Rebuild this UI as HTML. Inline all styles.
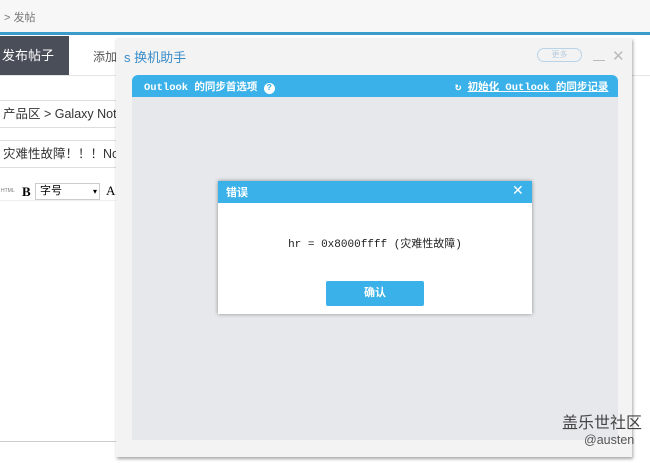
<!DOCTYPE html>
<html><head><meta charset="utf-8"><style>
*{margin:0;padding:0;box-sizing:border-box}
body{width:650px;height:463px;overflow:hidden;background:#fff;font-family:"Liberation Sans","Noto Sans CJK SC",sans-serif;position:relative}
.a{position:absolute}
</style></head><body>
<div class="a" style="left:0;top:0;width:650px;height:32px;background:#f7f7f7"></div>
<div class="a" style="left:4px;top:9px;font-size:11px;color:#777">&gt; 发帖</div>
<div class="a" style="left:0;top:32px;width:650px;height:3px;background:#3a9ccb"></div>
<div class="a" style="left:0;top:36px;width:69px;height:39px;background:#4a4e59;color:#fff;font-size:13px;line-height:39px;padding-left:2px">发布帖子</div>
<div class="a" style="left:93px;top:48px;font-size:12px;color:#555">添加</div>
<div class="a" style="left:0;top:75px;width:650px;height:1px;background:#e5e5e5"></div>
<div class="a" style="left:-2px;top:100px;width:300px;height:28px;border:1px solid #ddd;font-size:12.5px;line-height:26px;padding-left:4px;color:#333;white-space:nowrap;overflow:hidden">产品区 &gt; Galaxy Note系</div>
<div class="a" style="left:-2px;top:140px;width:300px;height:28px;border:1px solid #ddd;font-size:12.5px;line-height:26px;padding-left:4px;color:#333;white-space:nowrap;overflow:hidden">灾难性故障！！！Note</div>
<div class="a" style="left:0;top:181px;width:300px;height:20px;border-bottom:1px solid #eee"></div>
<div class="a" style="left:1px;top:188px;font-size:5px;color:#777">HTML</div>
<div class="a" style="left:22px;top:184px;font-size:13px;font-weight:bold;font-family:'Liberation Serif',serif">B</div>
<div class="a" style="left:35px;top:183px;width:65px;height:17px;border:1px solid #ccc;font-size:11px;line-height:15px;padding-left:4px">字号<span style="position:absolute;right:2px;font-size:8px">▾</span></div>
<div class="a" style="left:106px;top:183px;font-size:13px;font-family:'Liberation Serif',serif">A</div>
<div class="a" style="left:0;top:441px;width:120px;height:1px;background:#ccc"></div>
<div class="a" style="left:116px;top:38px;width:516px;height:419px;background:#f3f3f3;box-shadow:1px 2px 3px rgba(0,0,0,.35)"></div>
<div class="a" style="left:124px;top:47px;font-size:13px;color:#3a8cc8">s 换机助手</div>
<div class="a" style="left:537px;top:48px;width:45px;height:14px;border:1px solid #b8d4ea;border-radius:8px;font-size:8px;color:#b8cce0;text-align:center;line-height:12px">更多</div>
<div class="a" style="left:593px;top:60px;width:12px;height:1px;background:#bbb"></div>
<div class="a" style="left:612px;top:47px;font-size:15px;color:#bbb">✕</div>
<div class="a" style="left:132px;top:75px;width:486px;height:22px;background:#3ab1e8;border-radius:6px 6px 0 0"></div>
<div class="a" style="left:144px;top:79px;font-size:10.5px;color:#fff;font-weight:bold;font-family:'Liberation Mono','Noto Sans CJK SC',monospace">Outlook 的同步首选项 <span style="display:inline-block;width:11px;height:11px;border-radius:50%;background:#fff;color:#3ab1e8;text-align:center;line-height:11px;font-size:9px">?</span></div>
<div class="a" style="left:455px;top:79px;font-size:10.5px;color:#fff;font-weight:bold;font-family:'Liberation Mono','Noto Sans CJK SC',monospace">↻ <u>初始化 Outlook 的同步记录</u></div>
<div class="a" style="left:132px;top:97px;width:486px;height:343px;background:#e7e8eb"></div>
<div class="a" style="left:218px;top:181px;width:314px;height:133px;background:#fff;box-shadow:0 0 4px rgba(0,0,0,.4)"></div>
<div class="a" style="left:218px;top:181px;width:314px;height:22px;background:#3ab1e8"></div>
<div class="a" style="left:226px;top:184px;font-size:11px;color:#fff;font-weight:bold">错误</div>
<div class="a" style="left:512px;top:182px;font-size:14px;color:#fff">✕</div>
<div class="a" style="left:218px;top:235px;width:314px;text-align:center;font-size:11px;color:#222;font-family:'Liberation Mono','Noto Sans CJK SC',monospace">hr = 0x8000ffff (灾难性故障)</div>
<div class="a" style="left:326px;top:281px;width:98px;height:25px;background:#3ab1e8;border-radius:2px;color:#fff;font-size:11px;font-weight:bold;text-align:center;line-height:25px">确认</div>
<div class="a" style="left:562px;top:409px;font-size:16px;color:#444">盖乐世社区</div>
<div class="a" style="left:584px;top:433px;font-size:12.5px;color:#555">@austen</div>
</body></html>
